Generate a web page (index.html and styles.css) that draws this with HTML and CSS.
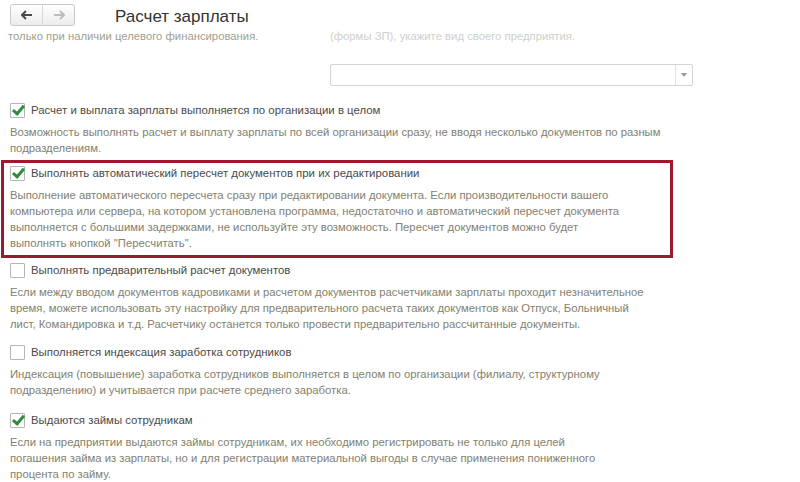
FILE: index.html
```html
<!DOCTYPE html>
<html lang="ru">
<head>
<meta charset="utf-8">
<link rel="stylesheet" href="styles.css">
</head>
<body>
<div class="header">
  <div class="nav">
    <span class="navbtn"><svg width="12" height="10" viewBox="0 0 12 10"><path d="M1 5h10M5 1L1 5l4 4" fill="none" stroke="#4a4a4a" stroke-width="2"/></svg></span>
    <span class="navbtn"><svg width="12" height="10" viewBox="0 0 12 10"><path d="M1 5h10M7 1l4 4-4 4" fill="none" stroke="#bdbdbd" stroke-width="2"/></svg></span>
  </div>
  <div class="title">Расчет зарплаты</div>
</div>

<div class="top">
  <div class="top-left">только при наличии целевого финансирования.</div>
  <div class="top-right">
    <div class="faded">(формы ЗП), укажите вид своего предприятия.</div>
    <div class="select"><span class="select-field"></span><span class="select-btn"><svg width="6" height="4" viewBox="0 0 6 4"><path d="M0 0h6L3 4z" fill="#999"/></svg></span></div>
  </div>
</div>

<div class="option opt1">
  <div class="label"><span class="cb checked"></span>Расчет и выплата зарплаты выполняется по организации в целом</div>
  <div class="desc">Возможность выполнять расчет и выплату зарплаты по всей организации сразу, не вводя несколько документов по разным подразделениям.</div>
</div>

<div class="option highlight">
  <div class="label"><span class="cb checked"></span>Выполнять автоматический пересчет документов при их редактировании</div>
  <div class="desc">Выполнение автоматического пересчета сразу при редактировании документа. Если производительности вашего компьютера или сервера, на котором установлена программа, недостаточно и автоматический пересчет документа выполняется с большими задержками, не используйте эту возможность. Пересчет документов можно будет выполнять кнопкой "Пересчитать".</div>
</div>

<div class="option opt3">
  <div class="label"><span class="cb"></span>Выполнять предварительный расчет документов</div>
  <div class="desc">Если между вводом документов кадровиками и расчетом документов расчетчиками зарплаты проходит незначительное время, можете использовать эту настройку для предварительного расчета таких документов как Отпуск, Больничный лист, Командировка и т.д. Расчетчику останется только провести предварительно рассчитанные документы.</div>
</div>

<div class="option opt4">
  <div class="label"><span class="cb"></span>Выполняется индексация заработка сотрудников</div>
  <div class="desc">Индексация (повышение) заработка сотрудников выполняется в целом по организации (филиалу, структурному подразделению) и учитывается при расчете среднего заработка.</div>
</div>

<div class="option opt5">
  <div class="label"><span class="cb checked"></span>Выдаются займы сотрудникам</div>
  <div class="desc">Если на предприятии выдаются займы сотрудникам, их необходимо регистрировать не только для целей погашения займа из зарплаты, но и для регистрации материальной выгоды в случае применения пониженного процента по займу.</div>
</div>
</body>
</html>
```

FILE: styles.css
```css
html, body {
  margin: 0;
  padding: 0;
  background: #fff;
}
body {
  font-family: "Liberation Sans", Arial, sans-serif;
  font-size: 12px;
  color: #444;
  width: 800px;
  height: 482px;
  overflow: hidden;
}
.header {
  display: flex;
  align-items: center;
  height: 30px;
  padding-left: 10px;
}
.nav {
  display: flex;
  border: 1px solid #c9c9c9;
  border-radius: 3px;
  height: 20px;
  background: linear-gradient(#ffffff, #ececec);
}
.navbtn {
  width: 31px;
  display: flex;
  align-items: center;
  justify-content: center;
}
.navbtn + .navbtn {
  border-left: 1px solid #d8d8d8;
}
.title {
  margin-left: 40px;
  margin-top: 3px;
  font-size: 17px;
  color: #333;
}
.top {
  display: flex;
  padding-left: 8px;
}
.top-left {
  width: 322px;
  color: #a09f90;
  line-height: 16px;
  font-size: 11.3px;
  margin-top: -2px;
}
.top-right {
  display: flex;
  flex-direction: column;
  font-size: 11.3px;
}
.faded {
  color: #cfcfcf;
  line-height: 16px;
  margin-top: -2px;
}
.select {
  display: flex;
  margin-top: 20px;
  width: 361px;
  height: 20px;
  border: 1px solid #d4d4d4;
  border-radius: 2px;
}
.select-field {
  flex: 1;
}
.select-btn {
  width: 16px;
  border-left: 1px solid #e2e2e2;
  display: flex;
  align-items: center;
  justify-content: center;
}
.option {
  padding-left: 10px;
}
.label {
  display: flex;
  align-items: center;
  height: 20px;
  color: #4a4a4a;
  font-size: 11.4px;
}
.cb {
  width: 13px;
  height: 13px;
  border: 1px solid #b5b5b5;
  border-radius: 1px;
  margin-right: 6px;
  background: #fff;
  position: relative;
  flex: none;
}
.cb.checked::after {
  content: "";
  position: absolute;
  left: 4px;
  top: -1px;
  width: 4px;
  height: 9px;
  border: solid #2e8b3a;
  border-width: 0 3px 3px 0;
  transform: rotate(40deg);
}
.desc {
  margin-top: 4px;
  line-height: 16px;
  color: #838170;
  font-size: 11.3px;
}
.opt1 {
  margin-top: 14px;
}
.opt1 .desc {
  width: 662px;
}
.highlight {
  margin-top: 4px;
  margin-left: 1px;
  padding-left: 6px;
  width: 660px;
  border: 3px solid #9c1a2e;
  padding-bottom: 4px;
}
.highlight .desc {
  width: 622px;
}
.opt3 {
  margin-top: 2px;
}
.opt3 .desc {
  width: 641px;
}
.opt4 {
  margin-top: 10px;
}
.opt4 .desc {
  width: 650px;
}
.opt5 {
  margin-top: 12px;
}
.opt5 .desc {
  width: 610px;
}
```
